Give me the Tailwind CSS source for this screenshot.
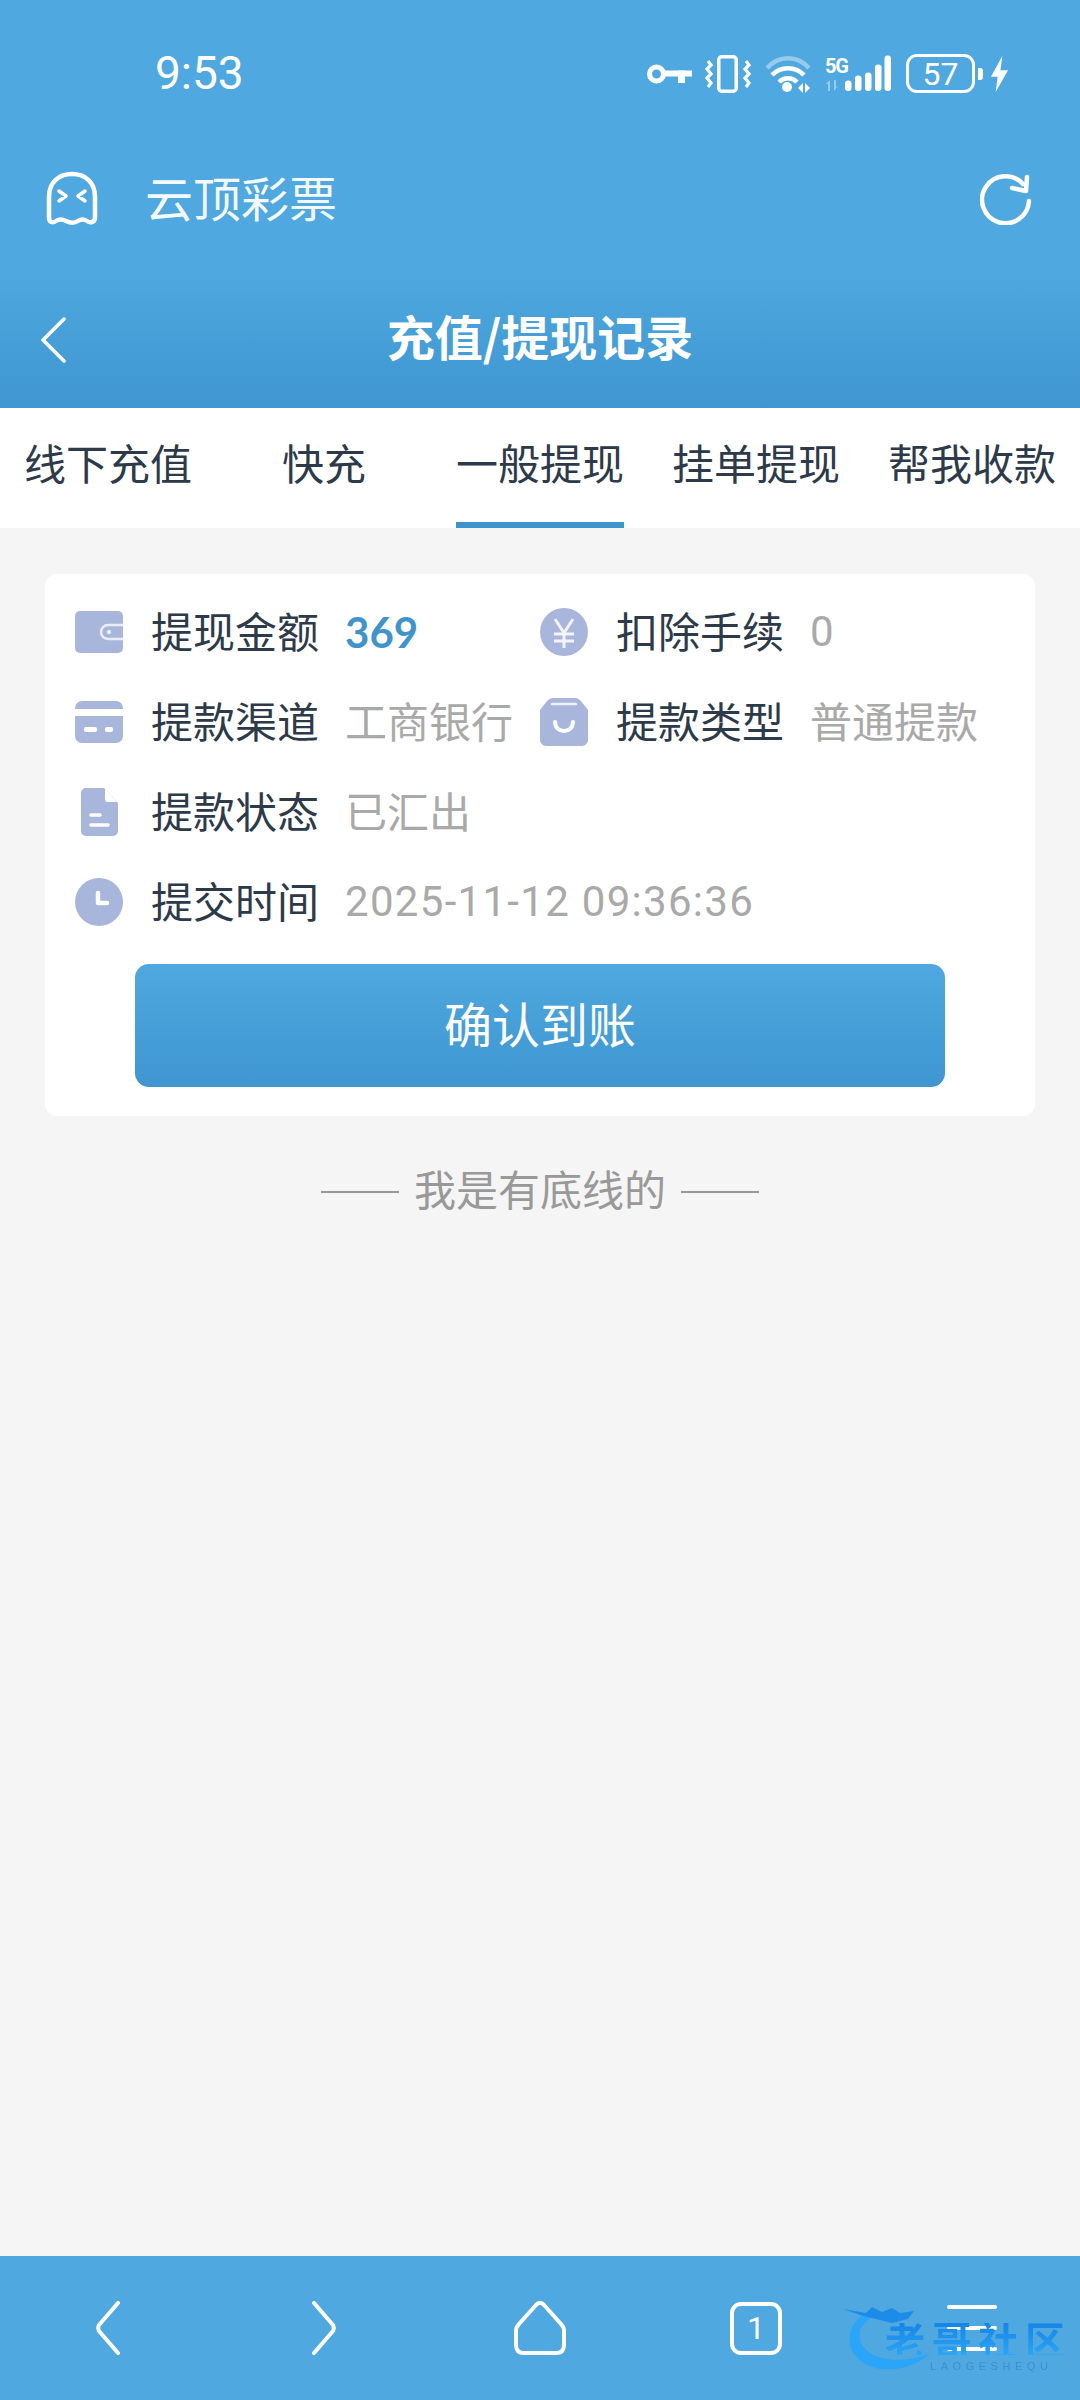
<!DOCTYPE html>
<html lang="zh-CN">
<head>
  <meta charset="UTF-8" />
  <meta name="viewport" content="width=device-width, initial-scale=1.0" />
  <title>充值/提现记录</title>
  <script src="https://cdn.jsdelivr.net/npm/@tailwindcss/browser@4"></script>
</head>
<body class="bg-[#f5f5f5] font-['Noto_Sans_CJK_SC','Noto_Sans',sans-serif]">
  <div class="relative w-[1080px] h-[2400px] flex flex-col overflow-hidden">

    <!-- Header -->
    <header class="bg-[#4fa8e0] text-white">
      <!-- Status bar -->
      <div class="h-[144px] pt-[54px] pl-[155px] pr-[71px] flex items-start justify-between">
        <span class="font-['Roboto',sans-serif] text-[46px] leading-[39px]">9:53</span>
        <div class="flex items-center h-[39px]">
          <svg class="w-[45px] h-[24px]" viewBox="0 0 45 24" fill="#fff">
            <circle cx="9.500" cy="12" r="7" fill="none" stroke="#fff" stroke-width="5" />
            <rect x="16" y="8.500" width="29" height="6" />
            <rect x="31" y="8.500" width="7" height="12.500" />
          </svg>
          <svg class="w-[47px] h-[38px] ml-[13px]" viewBox="0 0 47 38" fill="none" stroke="#fff">
            <rect x="13.750" y="1.750" width="17.500" height="34.500" rx="3" stroke-width="3.500" />
            <path d="M3 6l3 4-4 4 4 5-4 4 4 5-3 4" stroke-width="3.200" />
            <path d="M41 6l3 4-4 4 4 5-4 4 4 5-3 4" stroke-width="3.200" />
          </svg>
          <svg class="w-[46px] h-[38px] ml-[13px]" viewBox="0 0 46 38" fill="none">
            <path d="M2 13C14 0 32 0 44 13" stroke="#fff" stroke-opacity="0.4" stroke-width="4.500" />
            <path d="M7 20C16 11 30 11 39 20" stroke="#fff" stroke-width="4.500" />
            <path d="M14 27C19 22 27 22 32 27" stroke="#fff" stroke-width="4.500" />
            <circle cx="22" cy="32" r="5" fill="#fff" />
            <path d="M33 33l5-5v10zM40 28l5 5-5 5z" fill="#fff" />
          </svg>
          <svg class="w-[66px] h-[38px] ml-[14px]" viewBox="0 0 66 38">
            <text x="0" y="18" fill="#fff" font-family="Roboto" font-weight="700" font-size="20" textLength="24">5G</text>
            <path d="M1 29l4-4v11h-2v-7zM9 25h2v7l2-1-4 5z" fill="#fff" fill-opacity="0.4" />
            <rect x="20" y="25.500" width="6.500" height="10.500" rx="3" fill="#fff" />
            <rect x="30" y="20.500" width="6.500" height="15.500" rx="3" fill="#fff" />
            <rect x="40" y="17.500" width="6.500" height="18.500" rx="3" fill="#fff" />
            <rect x="50" y="9.500" width="6.500" height="26.500" rx="3" fill="#fff" />
            <rect x="59.500" y="0.500" width="6.500" height="35.500" rx="3" fill="#fff" />
          </svg>
          <div class="ml-[15px] w-[69px] h-[39px] rounded-[11px] border-[3px] border-white flex items-center justify-center font-['Roboto',sans-serif] text-[32px] leading-none">57</div>
          <div class="ml-[3px] w-[5px] h-[12px] rounded-r-[3px] bg-white"></div>
          <svg class="w-[19px] h-[38px] ml-[7px]" viewBox="0 0 20 38">
            <path d="M13 0L1 22h7L6 38l13-23h-8z" fill="#fff" />
          </svg>
        </div>
      </div>

      <!-- App row -->
      <div class="h-[126px] pl-[45px] pr-[48px] flex items-center justify-between pb-[16px]">
        <div class="flex items-center">
          <svg class="w-[54px] h-[56px]" viewBox="0 0 54 56" fill="none" stroke="#fff" stroke-linecap="round" stroke-linejoin="round">
            <path d="M4 46V26C4 11 14 3 27 3s23 8 23 23v20c0 6-5 6-8 4s-6-2-9 0-8 2-12 0-7-2-10 0-7 2-7-4z" stroke-width="4.500" />
            <path d="M14 20l7 5-7 5M40 20l-7 5 7 5" stroke-width="3.500" />
          </svg>
          <span class="ml-[46px] pb-[6px] text-[48px] leading-none text-white/95">云顶彩票</span>
        </div>
        <svg class="w-[52px] h-[52px]" viewBox="0 0 52 52" fill="none" stroke="#fff" stroke-width="4.500" stroke-linecap="round" stroke-linejoin="round">
          <path d="M43 11A23.500 23.500 0 1 0 49 28" />
          <path d="M47 4l-1 14-14-3" />
        </svg>
      </div>

      <!-- Title bar -->
      <div class="relative h-[138px] flex items-center justify-center bg-gradient-to-b from-[#4fa8e0] to-[#3f96d0]">
        <svg class="absolute left-[40px] top-[47px] w-[26px] h-[46px]" viewBox="0 0 26 46" fill="none" stroke="#fff" stroke-width="3.500" stroke-linecap="round" stroke-linejoin="round">
          <path d="M24 2L3 23l21 21" />
        </svg>
        <h1 class="pb-[8px] text-[48px] font-bold leading-none">充值/提现记录</h1>
      </div>
    </header>

    <!-- Tabs -->
    <nav class="grid grid-cols-5 h-[120px] bg-white text-[42px] text-[#2d3a4a]">
      <div class="flex items-center justify-center pb-[14px]"><span>线下充值</span></div>
      <div class="flex items-center justify-center pb-[14px]"><span>快充</span></div>
      <div class="flex items-center justify-center">
        <span class="h-full flex items-center border-b-[6px] border-[#3f94cc] pb-[8px]">一般提现</span>
      </div>
      <div class="flex items-center justify-center pb-[14px]"><span>挂单提现</span></div>
      <div class="flex items-center justify-center pb-[14px]"><span>帮我收款</span></div>
    </nav>

    <!-- Content -->
    <main class="flex-1 px-[45px] pt-[46px]">
      <section class="bg-white rounded-[12px] pt-[13px] pb-[29px] px-[30px]">
        <div class="grid grid-cols-[465px_1fr] auto-rows-[90px] text-[42px] leading-none text-[#2d3a4a]">

          <div class="flex items-center">
            <svg class="w-[48px] h-[42px] shrink-0" viewBox="0 0 48 42">
              <rect width="48" height="42" rx="5" fill="#a9b6dc" />
              <path d="M48 14H33a7 7 0 0 0 0 14h15" fill="none" stroke="#fff" stroke-opacity="0.75" stroke-width="2.500" />
              <circle cx="34" cy="21" r="2" fill="#fff" />
            </svg>
            <span class="ml-[28px] pb-[4px]">提现金额</span>
            <span class="ml-[26px] font-['Lato',sans-serif] font-bold text-[#3f94cc]">369</span>
          </div>

          <div class="flex items-center">
            <svg class="w-[48px] h-[48px] shrink-0" viewBox="0 0 48 48">
              <circle cx="24" cy="24" r="24" fill="#a9b6dc" />
              <path d="M15 11l9 14 9-14M14 26h20M14 33h20M24 25v15" fill="none" stroke="#fff" stroke-opacity="0.85" stroke-width="3" />
            </svg>
            <span class="ml-[28px] pb-[4px]">扣除手续</span>
            <span class="ml-[26px] font-['Roboto',sans-serif] text-[#a9a9a9]">0</span>
          </div>

          <div class="flex items-center">
            <svg class="w-[48px] h-[42px] shrink-0" viewBox="0 0 48 42">
              <rect width="48" height="42" rx="7" fill="#a9b6dc" />
              <rect y="8" width="48" height="7" fill="#fff" />
              <rect x="9" y="26" width="13" height="5" rx="2" fill="#fff" />
              <rect x="30" y="26" width="8" height="5" rx="2" fill="#fff" />
            </svg>
            <span class="ml-[28px] pb-[4px]">提款渠道</span>
            <span class="ml-[26px] pb-[4px] text-[#a9a9a9]">工商银行</span>
          </div>

          <div class="flex items-center">
            <svg class="w-[48px] h-[48px] shrink-0" viewBox="0 0 48 48">
              <path d="M14 0h20a8 8 0 0 1 7 3l7 9v30a6 6 0 0 1-6 6H6a6 6 0 0 1-6-6V12l7-9a8 8 0 0 1 7-3z" fill="#a9b6dc" />
              <path d="M12 6h24" stroke="#fff" stroke-opacity="0.8" stroke-width="2.500" stroke-linecap="round" />
              <path d="M15 24c0 12 18 12 18 0" fill="none" stroke="#fff" stroke-width="4" stroke-linecap="round" />
            </svg>
            <span class="ml-[28px] pb-[4px]">提款类型</span>
            <span class="ml-[26px] pb-[4px] text-[#a9a9a9]">普通提款</span>
          </div>

          <div class="col-span-2 flex items-center">
            <svg class="w-[48px] h-[48px] shrink-0" viewBox="0 0 48 48">
              <path d="M11 0h18l14 15v28a5 5 0 0 1-5 5H11a5 5 0 0 1-5-5V5a5 5 0 0 1 5-5z" fill="#a9b6dc" />
              <path d="M30 1l12 13H33a3 3 0 0 1-3-3z" fill="#fff" />
              <path d="M16 27h9M16 37h17" stroke="#fff" stroke-width="3.500" stroke-linecap="round" />
            </svg>
            <span class="ml-[28px] pb-[4px]">提款状态</span>
            <span class="ml-[26px] pb-[4px] text-[#a9a9a9]">已汇出</span>
          </div>

          <div class="col-span-2 flex items-center">
            <svg class="w-[48px] h-[48px] shrink-0" viewBox="0 0 48 48">
              <circle cx="24" cy="24" r="24" fill="#a9b6dc" />
              <path d="M23 15v10h9" fill="none" stroke="#fff" stroke-width="4.500" stroke-linecap="round" stroke-linejoin="round" />
            </svg>
            <span class="ml-[28px] pb-[4px]">提交时间</span>
            <span class="ml-[26px] font-['Roboto',sans-serif] tracking-[1.300px] text-[#a9a9a9]">2025-11-12 09:36:36</span>
          </div>
        </div>

        <button class="block mx-auto mt-[17px] pb-[8px] w-[810px] h-[123px] rounded-[14px] bg-gradient-to-b from-[#4fa8e0] to-[#3f96d0] text-white text-[48px]">确认到账</button>
      </section>

      <div class="mt-[45px] flex items-center justify-center text-[42px] leading-[54px] text-[#999999]">
        <span class="w-[78px] h-[2px] bg-[#999999]"></span>
        <span class="mx-[15px] pb-[8px]">我是有底线的</span>
        <span class="w-[78px] h-[2px] bg-[#999999]"></span>
      </div>
    </main>

    <!-- Browser toolbar -->
    <footer class="h-[144px] bg-[#4fa8e0] grid grid-cols-5 items-center">
      <div class="flex justify-center">
        <svg class="w-[24px] h-[54px]" viewBox="0 0 24 54" fill="none" stroke="#fff" stroke-width="4" stroke-linecap="round" stroke-linejoin="round">
          <path d="M22 2L3 24q-1.500 3 0 6l19 22" />
        </svg>
      </div>
      <div class="flex justify-center">
        <svg class="w-[24px] h-[54px]" viewBox="0 0 24 54" fill="none" stroke="#fff" stroke-width="4" stroke-linecap="round" stroke-linejoin="round">
          <path d="M2 2l19 22q1.500 3 0 6L2 52" />
        </svg>
      </div>
      <div class="flex justify-center">
        <svg class="w-[52px] h-[54px]" viewBox="0 0 52 54" fill="none" stroke="#fff" stroke-width="4" stroke-linejoin="round">
          <path d="M22 4q4-4 8 0l17 19q3 3 3 6v15q0 8-8 8H10q-8 0-8-8V29q0-3 3-6z" />
        </svg>
      </div>
      <div class="flex justify-center">
        <div class="w-[52px] h-[53px] rounded-[11px] border-[4px] border-white flex items-center justify-center text-white font-['Roboto',sans-serif] text-[32px] leading-none">1</div>
      </div>
      <div class="flex flex-col items-center gap-[17px]">
        <span class="w-[50px] h-[4px] rounded-full bg-white"></span>
        <span class="w-[50px] h-[4px] rounded-full bg-white"></span>
        <span class="w-[50px] h-[4px] rounded-full bg-white"></span>
      </div>
    </footer>

    <!-- Watermark over the toolbar -->
    <div class="absolute left-[842px] top-[2305px] w-[225px] h-[72px] blur-[0.7px]">
      <svg class="absolute left-0 top-0 w-[100px] h-[70px]" viewBox="0 0 100 70">
        <path d="M24 8C4 18-2 50 30 62C50 68 75 62 88 48C70 56 45 58 28 48C12 36 14 20 34 10Z" fill="#2aa5f7" />
        <path d="M1 4L24 8L30 2L40 7L50 3L58 8L72 6L66 14L50 18L34 14L18 10Z" fill="#1d8ce8" />
      </svg>
      <div class="absolute left-[43px] top-[18px] w-[180px] flex justify-between text-[40px] leading-[32px] font-bold bg-gradient-to-b from-[#1584e6] to-[#2aa5f7] bg-clip-text text-transparent">
        <span>老</span><span>哥</span><span>社</span><span>区</span>
      </div>
      <div class="absolute left-[88px] top-[56px] w-[118px] flex justify-between font-['Liberation_Sans',sans-serif] text-[11px] leading-none text-[#3f8fd0]">
        <span>L</span><span>A</span><span>O</span><span>G</span><span>E</span><span>S</span><span>H</span><span>E</span><span>Q</span><span>U</span>
      </div>
    </div>
  </div>
</body>
</html>
